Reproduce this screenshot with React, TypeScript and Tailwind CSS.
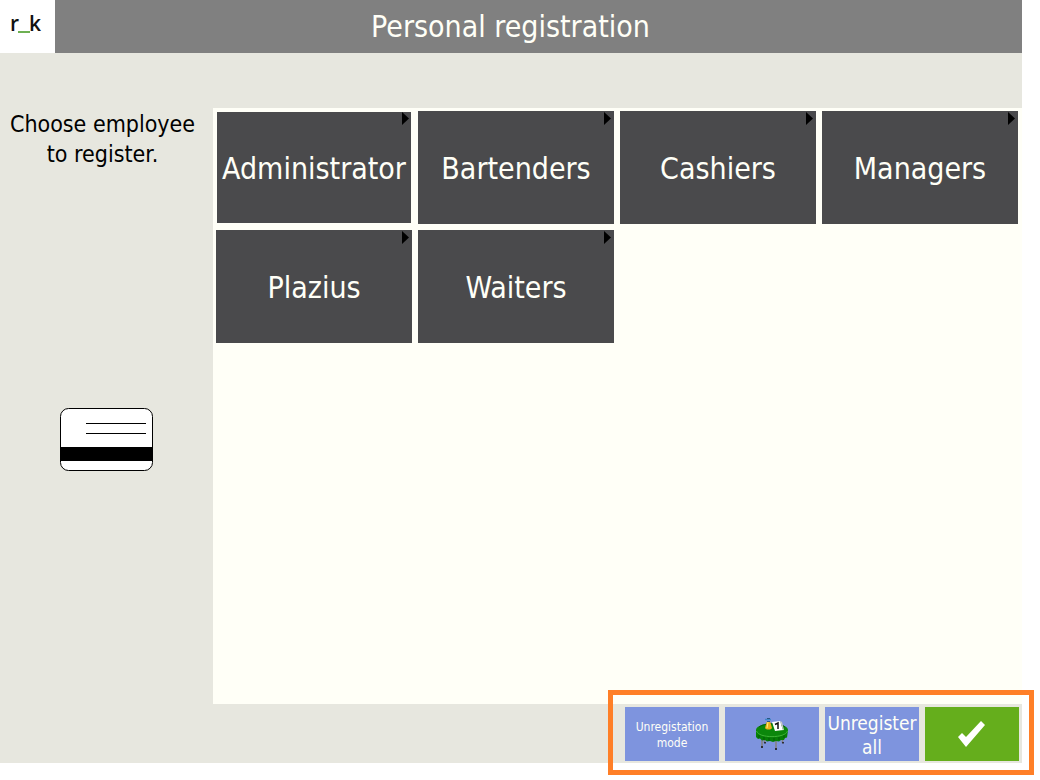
import { useState } from "react";

const groups = ["Administrator", "Bartenders", "Cashiers", "Managers", "Plazius", "Waiters"];

function Logo() {
  return (
    <svg viewBox="0 0 55 53" className="h-[53px] w-[55px] shrink-0 bg-white" role="img" aria-label="r_k">
      <g fontFamily="'Open Sans', sans-serif" fontSize="21" fontWeight="600" fill="#111">
        <text x="10" y="31">r</text>
        <text x="29" y="31">k</text>
      </g>
      <rect x="18" y="31" width="12" height="2" fill="#6db052" />
    </svg>
  );
}

function CardIcon() {
  return (
    <svg viewBox="0 0 93 63" className="h-[63px] w-[93px]" aria-hidden="true">
      <rect x="0.5" y="0.5" width="92" height="62" rx="8" fill="#fff" stroke="#000" />
      <path d="M26 15.5H86M26 25.5H86" stroke="#000" />
      <rect x="0" y="39" width="93" height="14" />
    </svg>
  );
}

function TableIcon() {
  return (
    <svg viewBox="0 0 34 34" className="h-[34px] w-[34px]" aria-hidden="true">
      {/* legs */}
      <path d="M7 22v8M21 23v9M27.500 20v6M9.500 21v5" stroke="#85807e" strokeWidth="1.500" />
      <path d="M6 29h2v2H6zM20 31h2v2h-2zM27 25h2v1.500h-2zM9 25h2v1.500H9z" fill="#2e2e33" />
      {/* cloth */}
      <path d="M1 13v7l2 2 2-.5 2 2 3-.5 2 1.500 3-.5 3 1 3-1 3 .5 2-1.500 3 0 1-2 2-.5 1-7z" fill="#067f06" />
      <path d="M4 18v3M9 20v3M14 21v3M19 21v3M24 20v3M29 18v3" stroke="#045b08" />
      <ellipse cx="17" cy="13" rx="16" ry="6.500" fill="#0b870b" />
      <path d="M1.500 14c2 7.500 29 7.500 31 0" fill="none" stroke="#3fb238" />
      <path d="M4 10c5-4 20-5 26 0" fill="none" stroke="#076007" />
      {/* cruet */}
      <path d="M12 4h3l2 7c-1 2-6 2-7 0z" fill="#efae1b" />
      <path d="M13 5l-1 6" stroke="#fff27a" />
      <path d="M10 2.500h6" stroke="#3f86c8" strokeWidth="1.500" />
      <path d="M12 1h3v1h-3zM12 4h3v1h-3z" fill="#285780" />
      {/* number plate */}
      <path d="M17 5l8-1 3 9-8 1z" fill="#fff" />
      <path d="M25 4l2 1 2 8-8 1 7-1z" fill="#c8cac8" />
      <path d="M20 7.500l3-1.500v6" fill="none" stroke="#111" strokeWidth="1.500" />
    </svg>
  );
}

function CheckIcon() {
  return (
    <svg viewBox="0 0 28 26" className="h-[26px] w-[28px]" aria-hidden="true">
      <path d="M0 16l4-4 4 4L23 0l4 4L8 26z" fill="#fff" />
    </svg>
  );
}

export default function App() {
  const [selected, setSelected] = useState("Administrator");

  return (
    <div className="flex min-h-screen flex-col bg-white pr-[18px] pb-[17px] font-['DejaVu_Sans_Condensed','DejaVu_Sans',sans-serif]">
      <header className="flex items-center bg-[#808080]">
        <Logo />
        <h1 className="flex-1 pr-14 text-center text-[30px] leading-[52px] text-[#fffff7]">
          Personal registration
        </h1>
      </header>

      <div className="flex flex-1 flex-col bg-[#e7e7df] pt-[55px]">
        <main className="flex flex-1">
          <aside className="flex w-[213px] shrink-0 flex-col items-center text-black">
            <p className="pt-px pr-2 text-center text-[23px] leading-[30px]">
              Choose employee
              <br />
              to register.
            </p>
            <div className="mt-[239px]">
              <CardIcon />
            </div>
          </aside>

          <section className="grid flex-1 auto-rows-[113px] grid-cols-4 content-start gap-[6px] bg-[#fffff7] py-[3px] pr-1 pl-[3px]">
            {groups.map((name) => (
              <button
                key={name}
                type="button"
                aria-pressed={selected === name}
                onClick={() => setSelected(name)}
                className={`relative border bg-[#4a4a4c] pt-[2px] text-[30px] text-[#fffff7] ${
                  selected === name ? "border-[#fffff7]" : "border-[#4a4a4c]"
                }`}
              >
                {name}
                <svg viewBox="0 0 7 13" className="absolute top-0 right-[2px] h-[13px] w-[7px]" aria-hidden="true">
                  <path d="M0 0l7 6.5L0 13z" />
                </svg>
              </button>
            ))}
          </section>
        </main>

        <footer className="flex justify-end pt-[3px] pr-[3px] pb-[2px]">
          <div className="relative grid auto-rows-[54px] grid-cols-[repeat(4,94px)] gap-[6px] text-[#fffff7]">
            <button type="button" className="bg-[#7e94de] pt-[2px] text-[12px] leading-4">
              Unregistation
              <br />
              mode
            </button>
            <button type="button" aria-label="Tables" className="flex items-center justify-center bg-[#7e94de]">
              <TableIcon />
            </button>
            <button type="button" className="bg-[#7e94de] pt-[2px] text-[19px] leading-6">
              Unregister
              <br />
              all
            </button>
            <button type="button" aria-label="Confirm" className="flex items-center justify-center bg-[#65ae1c]">
              <CheckIcon />
            </button>
            <div className="pointer-events-none absolute -top-[17px] -right-[15px] -bottom-[14px] -left-[17px] border-[5px] border-[#ff7f27]" />
          </div>
        </footer>
      </div>
    </div>
  );
}
